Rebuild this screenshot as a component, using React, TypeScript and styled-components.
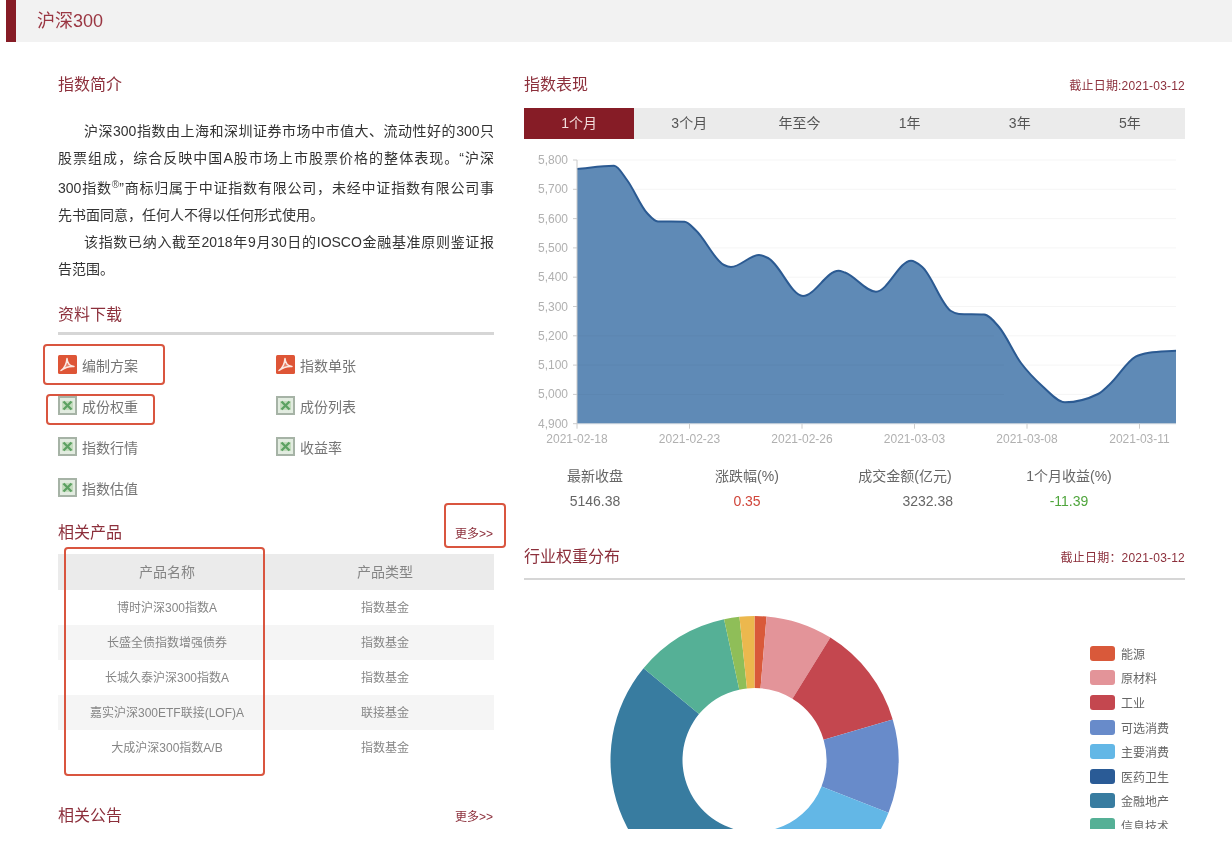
import React from "react";
import styled, { createGlobalStyle } from "styled-components";

const FONT = `"Liberation Sans", "Noto Sans CJK SC", sans-serif`;
const ACCENT = "#8c2f3b";

const GlobalStyle = createGlobalStyle`
  html, body { margin: 0; padding: 0; background: #fff; }
  body { font-family: ${FONT}; }
`;

const TABS = ["1个月", "3个月", "年至今", "1年", "3年", "5年"];

const DOWNLOADS = [
  { label: "编制方案", kind: "pdf", mark: "a" },
  { label: "指数单张", kind: "pdf" },
  { label: "成份权重", kind: "xls", mark: "b" },
  { label: "成份列表", kind: "xls" },
  { label: "指数行情", kind: "xls" },
  { label: "收益率", kind: "xls" },
  { label: "指数估值", kind: "xls" },
];

const PRODUCTS = [
  ["博时沪深300指数A", "指数基金"],
  ["长盛全债指数增强债券", "指数基金"],
  ["长城久泰沪深300指数A", "指数基金"],
  ["嘉实沪深300ETF联接(LOF)A", "联接基金"],
  ["大成沪深300指数A/B", "指数基金"],
];

const STATS = [
  { label: "最新收盘", value: "5146.38", color: "#666" },
  { label: "涨跌幅(%)", value: "0.35", color: "#d0453a" },
  { label: "成交金额(亿元)", value: "3232.38", color: "#666", shifted: true },
  { label: "1个月收益(%)", value: "-11.39", color: "#4fa53c" },
];

const SECTORS = [
  { name: "能源", color: "#d9593a", end: 4.8 },
  { name: "原材料", color: "#e39499", end: 31.8 },
  { name: "工业", color: "#c4474f", end: 73.7 },
  { name: "可选消费", color: "#688bca", end: 111.5 },
  { name: "主要消费", color: "#63b7e6", end: 165 },
  { name: "医药卫生", color: "#2a5b96", end: 190 },
  { name: "金融地产", color: "#387ca0", end: 309.6 },
  { name: "信息技术", color: "#55b096", end: 347.8 },
  { name: "电信", color: "#8fbe58", end: 354 },
  { name: "公用", color: "#ecb84e", end: 360 },
];
const LEGEND = SECTORS.slice(0, 8);

// chart coordinates: svg origin is at page (524, 150)
const LINE: [number, number][] = [
  [53, 19], [90, 15.7], [103, 30], [123, 63], [134, 71.5], [160.5, 71.7], [171.5, 80],
  [200, 115], [207, 117], [235, 105], [244, 108], [279, 146], [314.5, 120.7], [321, 122.5],
  [352, 141.7], [387, 110.7], [398, 116.7], [427, 161], [435, 164], [460, 164.5], [475, 177],
  [497, 213], [519, 236.7], [541, 252.3], [574, 244], [585, 235], [611.6, 206.7], [625, 202.7], [652, 200.7],
];
const AXIS_Y = 273.7;
const AXIS_LEFT = 53;
const AXIS_RIGHT = 652;
const Y_LABELS = ["5,800", "5,700", "5,600", "5,500", "5,400", "5,300", "5,200", "5,100", "5,000", "4,900"];
const X_LABELS = ["2021-02-18", "2021-02-23", "2021-02-26", "2021-03-03", "2021-03-08", "2021-03-11"];

// monotone cubic: flat tangents at the turning points, like the chart lib draws it
const smoothPath = (pts: [number, number][]) => {
  const n = pts.length;
  const slopes = pts.slice(0, -1).map((p, i) => (pts[i + 1][1] - p[1]) / (pts[i + 1][0] - p[0]));
  const tangents = pts.map((_, i) => {
    if (i === 0) return slopes[0];
    if (i === n - 1) return slopes[n - 2];
    const h0 = pts[i][0] - pts[i - 1][0];
    const h1 = pts[i + 1][0] - pts[i][0];
    const s0 = slopes[i - 1];
    const s1 = slopes[i];
    const p = (s0 * h1 + s1 * h0) / (h0 + h1);
    return (Math.sign(s0) + Math.sign(s1)) * Math.min(Math.abs(s0), Math.abs(s1), 0.5 * Math.abs(p));
  });
  let d = `M${pts[0][0]} ${pts[0][1]}`;
  for (let i = 0; i < n - 1; i++) {
    const dx = (pts[i + 1][0] - pts[i][0]) / 3;
    const c1y = pts[i][1] + dx * tangents[i];
    const c2y = pts[i + 1][1] - dx * tangents[i + 1];
    d += ` C${(pts[i][0] + dx).toFixed(1)} ${c1y.toFixed(1)} ${(pts[i + 1][0] - dx).toFixed(1)} ${c2y.toFixed(1)} ${pts[i + 1][0]} ${pts[i + 1][1]}`;
  }
  return d;
};

const polar = (cx: number, cy: number, r: number, deg: number) => {
  const a = (deg * Math.PI) / 180;
  return [cx + r * Math.sin(a), cy - r * Math.cos(a)];
};

const slicePath = (start: number, end: number) => {
  const cx = 230.5;
  const cy = 180;
  const [ax, ay] = polar(cx, cy, 144, start);
  const [bx, by] = polar(cx, cy, 144, end);
  const [ix, iy] = polar(cx, cy, 72, end);
  const [jx, jy] = polar(cx, cy, 72, start);
  const large = end - start > 180 ? 1 : 0;
  return `M${ax} ${ay} A144 144 0 ${large} 1 ${bx} ${by} L${ix} ${iy} A72 72 0 ${large} 0 ${jx} ${jy} Z`;
};

const Page = styled.div`
  width: 1232px;
  height: 829px;
  overflow: hidden;
  background: #fff;
  filter: blur(0.45px);
`;

const Header = styled.header`
  box-sizing: border-box;
  height: 42px;
  margin-left: 6px;
  display: flex;
  align-items: center;
  background: #f2f2f2;
  border-left: 10px solid #861c26;
  padding: 0 0 5px 21px;
  font-size: 18px;
  color: #9a3642;
`;

const Columns = styled.main`
  display: grid;
  grid-template-columns: 436px 661px;
  column-gap: 30px;
  padding: 30px 0 0 58px;
`;

const Column = styled.section`
  display: flex;
  flex-direction: column;
`;

const TitleRow = styled.div<{ $gap?: number; $top?: number; $rule?: number; $pad?: number }>`
  display: flex;
  justify-content: space-between;
  align-items: center;
  height: 24px;
  margin-top: ${(p) => p.$top ?? 0}px;
  margin-bottom: ${(p) => p.$gap ?? 0}px;
  ${(p) => (p.$rule ? `padding-bottom: ${p.$pad ?? 6}px; border-bottom: ${p.$rule}px solid #d6d6d6;` : "")}
`;

const Title = styled.h2`
  margin: 1px 0 0;
  font-size: 16px;
  font-weight: 400;
  line-height: 24px;
  color: ${ACCENT};
`;

const DateText = styled.span`
  font-size: 12px;
  letter-spacing: 0.2px;
  color: ${ACCENT};
`;

const IntroLine = styled.p<{ $indent?: boolean; $fill?: boolean; $top?: number }>`
  margin: ${(p) => p.$top ?? 0}px 0 0;
  padding-left: ${(p) => (p.$indent ? 26 : 0)}px;
  font-size: 14px;
  line-height: 27px;
  color: #333;
  text-align: ${(p) => (p.$fill ? "justify" : "left")};
  text-align-last: ${(p) => (p.$fill ? "justify" : "left")};

  sup {
    font-size: 10px;
    line-height: 0;
    vertical-align: 5px;
    color: #555;
  }
`;

const DownloadGrid = styled.div`
  display: grid;
  grid-template-columns: 218px 218px;
  grid-auto-rows: 41px;
  margin-top: 9px;
`;

const DownloadItem = styled.a`
  position: relative;
  display: flex;
  align-items: center;
  gap: 5px;
  font-size: 14px;
  color: #757575;
`;

const Highlight = styled.span<{ $left: number; $top: number; $w: number; $h: number }>`
  position: absolute;
  left: ${(p) => p.$left}px;
  top: ${(p) => p.$top}px;
  width: ${(p) => p.$w}px;
  height: ${(p) => p.$h}px;
  box-sizing: border-box;
  border: 2px solid #d9553f;
  border-radius: 4px;
  pointer-events: none;
`;

const MoreLink = styled.a`
  position: relative;
  font-size: 12px;
  color: ${ACCENT};
  margin-right: 1px;
`;

const TableWrap = styled.div`
  position: relative;
  margin-top: 10px;
`;

const Table = styled.table`
  width: 436px;
  border-collapse: collapse;
  table-layout: fixed;
`;

const HeadCell = styled.th`
  height: 36px;
  padding: 0 0 3px;
  box-sizing: border-box;
  background: #ebebeb;
  font-size: 14px;
  font-weight: 400;
  color: #858585;
`;

const Row = styled.tr`
  height: 35px;
  &:nth-child(even) {
    background: #f5f5f5;
  }
`;

const Cell = styled.td`
  padding: 0 0 2px;
  box-sizing: border-box;
  text-align: center;
  font-size: 12px;
  color: #868686;
`;

const Tabs = styled.div`
  display: grid;
  grid-template-columns: repeat(6, 1fr);
  height: 31px;
  margin-top: 12px;
  background: #ebebeb;
`;

const Tab = styled.div<{ $active?: boolean }>`
  display: flex;
  align-items: center;
  justify-content: center;
  padding-bottom: 3px;
  box-sizing: border-box;
  font-size: 14px;
  color: ${(p) => (p.$active ? "#f3dcdc" : "#555")};
  background: ${(p) => (p.$active ? "#861c26" : "transparent")};
`;

const ChartSvg = styled.svg`
  display: block;
  margin-top: 11px;
`;

const Stats = styled.div`
  display: grid;
  grid-template-columns: 142px 162px 154px 174px;
  margin-top: 13px;
  font-size: 14px;
  line-height: 25px;
  text-align: center;
  color: #666;
`;

const StatValue = styled.div<{ $shifted?: boolean; $color: string }>`
  color: ${(p) => p.$color};
  ${(p) => (p.$shifted ? "text-align: right; padding-right: 29px;" : "")}
`;

const DonutArea = styled.div`
  display: flex;
  justify-content: space-between;
  height: 260px;
`;

const Legend = styled.ul`
  width: 95px;
  margin: 0;
  padding: 61px 0 0;
  list-style: none;
`;

const LegendRow = styled.li`
  display: flex;
  align-items: center;
  gap: 6px;
  height: 24.6px;
  font-size: 12px;
  color: #666;
`;

const Swatch = styled.i<{ $color: string }>`
  width: 25px;
  height: 15px;
  border-radius: 3px;
  background: ${(p) => p.$color};
`;

const PdfIcon = () => (
  <svg width="19" height="19" viewBox="0 0 19 19">
    <rect width="19" height="19" rx="1.5" fill="#de5536" />
    <path
      d="M3 15.5C6 13.5 8.5 9 9 3.5c.3 4.5 3 7.5 7 8-4-.3-9 .8-13 4Z"
      fill="#fbe9e2"
      fillOpacity="0.3"
      stroke="#fbe9e2"
      strokeWidth="1.5"
      strokeLinejoin="round"
    />
  </svg>
);

const XlsIcon = () => (
  <svg width="19" height="19" viewBox="0 0 19 19">
    <rect width="19" height="19" fill="#a6b3a6" />
    <rect x="2" y="2" width="15" height="15" fill="#e2ece0" />
    <rect x="4" y="5" width="11" height="9" fill="#c4dcbe" />
    <path d="M5.5 5.5l8 8M13.5 5.5l-8 8" stroke="#5da263" strokeWidth="2.4" />
  </svg>
);

const PerformanceChart = () => {
  const line = smoothPath(LINE);
  const step = (AXIS_Y - 10) / 9;
  return (
    <ChartSvg width="661" height="301" viewBox="0 0 661 301">
      {Y_LABELS.map((label, i) => {
        const y = 10 + step * i;
        return (
          <g key={label}>
            <line x1={AXIS_LEFT} x2={AXIS_RIGHT} y1={y} y2={y} stroke="#f5f5f5" />
            <line x1={AXIS_LEFT - 4} x2={AXIS_LEFT} y1={y} y2={y} stroke="#ccc" />
            <text x="44" y={y + 4} textAnchor="end" fontSize="12" fill="#b0b0b0" fontFamily={FONT}>
              {label}
            </text>
          </g>
        );
      })}
      <path d={`${line} L${AXIS_RIGHT} ${AXIS_Y} L${AXIS_LEFT} ${AXIS_Y} Z`} fill="#5f8ab6" />
      <path
        d={Y_LABELS.slice(6, 9)
          .map((_, i) => `M${AXIS_LEFT} ${10 + step * (i + 6)}H${i === 0 ? 470 : 480}`)
          .join("")}
        stroke="#000"
        strokeOpacity="0.03"
      />
      <path d={line} fill="none" stroke="#2b5a92" strokeWidth="2" />
      <line x1={AXIS_LEFT} x2={AXIS_LEFT} y1="10" y2={AXIS_Y} stroke="#c8c8c8" />
      <line x1={AXIS_LEFT} x2={AXIS_RIGHT} y1={AXIS_Y} y2={AXIS_Y} stroke="#c8d2dc" />
      {X_LABELS.map((label, i) => {
        const x = AXIS_LEFT + 112.5 * i;
        return (
          <g key={label}>
            <line x1={x} x2={x} y1={AXIS_Y} y2={AXIS_Y + 5} stroke="#ccc" />
            <text x={x} y={AXIS_Y + 19} textAnchor="middle" fontSize="12" fill="#b0b0b0" fontFamily={FONT}>
              {label}
            </text>
          </g>
        );
      })}
    </ChartSvg>
  );
};

const Donut = () => (
  <svg width="420" height="260" viewBox="0 0 420 260">
    {SECTORS.map((s, i) => (
      <path key={s.name} d={slicePath(i === 0 ? 0 : SECTORS[i - 1].end, s.end)} fill={s.color} />
    ))}
  </svg>
);

export default function App() {
  return (
    <Page>
      <GlobalStyle />
      <Header>沪深300</Header>
      <Columns>
        <Column>
          <TitleRow $gap={22}>
            <Title>指数简介</Title>
          </TitleRow>
          <IntroLine $indent $fill>沪深300指数由上海和深圳证券市场中市值大、流动性好的300只</IntroLine>
          <IntroLine $fill>股票组成，综合反映中国A股市场上市股票价格的整体表现。“沪深</IntroLine>
          <IntroLine $fill $top={3}>
            300指数<sup>®</sup>”商标归属于中证指数有限公司，未经中证指数有限公司事
          </IntroLine>
          <IntroLine>先书面同意，任何人不得以任何形式使用。</IntroLine>
          <IntroLine $indent $fill>该指数已纳入截至2018年9月30日的IOSCO金融基准原则鉴证报</IntroLine>
          <IntroLine>告范围。</IntroLine>
          <TitleRow $top={19} $rule={3}>
            <Title>资料下载</Title>
          </TitleRow>
          <DownloadGrid>
            {DOWNLOADS.map((d) => (
              <DownloadItem key={d.label}>
                {d.kind === "pdf" ? <PdfIcon /> : <XlsIcon />}
                {d.label}
                {d.mark === "a" && <Highlight $left={-15} $top={-0.5} $w={122} $h={41} />}
                {d.mark === "b" && <Highlight $left={-12} $top={8.5} $w={109} $h={31} />}
              </DownloadItem>
            ))}
          </DownloadGrid>
          <TitleRow $top={12}>
            <Title>相关产品</Title>
            <MoreLink>
              更多&gt;&gt;
              <Highlight $left={-11} $top={-21} $w={62} $h={45} />
            </MoreLink>
          </TitleRow>
          <TableWrap>
            <Table>
              <thead>
                <tr>
                  <HeadCell>产品名称</HeadCell>
                  <HeadCell>产品类型</HeadCell>
                </tr>
              </thead>
              <tbody>
                {PRODUCTS.map(([name, type]) => (
                  <Row key={name}>
                    <Cell>{name}</Cell>
                    <Cell>{type}</Cell>
                  </Row>
                ))}
              </tbody>
            </Table>
            <Highlight $left={6} $top={-7.5} $w={201} $h={229} />
          </TableWrap>
          <TitleRow $top={38}>
            <Title>相关公告</Title>
            <MoreLink>更多&gt;&gt;</MoreLink>
          </TitleRow>
        </Column>
        <Column>
          <TitleRow>
            <Title>指数表现</Title>
            <DateText>截止日期:2021-03-12</DateText>
          </TitleRow>
          <Tabs>
            {TABS.map((t, i) => (
              <Tab key={t} $active={i === 0}>
                {t}
              </Tab>
            ))}
          </Tabs>
          <PerformanceChart />
          <Stats>
            {STATS.map((s) => (
              <div key={s.label}>{s.label}</div>
            ))}
            {STATS.map((s) => (
              <StatValue key={s.label} $shifted={s.shifted} $color={s.color}>
                {s.value}
              </StatValue>
            ))}
          </Stats>
          <TitleRow $top={30} $rule={2} $pad={10}>
            <Title>行业权重分布</Title>
            <DateText>截止日期：2021-03-12</DateText>
          </TitleRow>
          <DonutArea>
            <Donut />
            <Legend>
              {LEGEND.map((s) => (
                <LegendRow key={s.name}>
                  <Swatch $color={s.color} />
                  {s.name}
                </LegendRow>
              ))}
            </Legend>
          </DonutArea>
        </Column>
      </Columns>
    </Page>
  );
}
